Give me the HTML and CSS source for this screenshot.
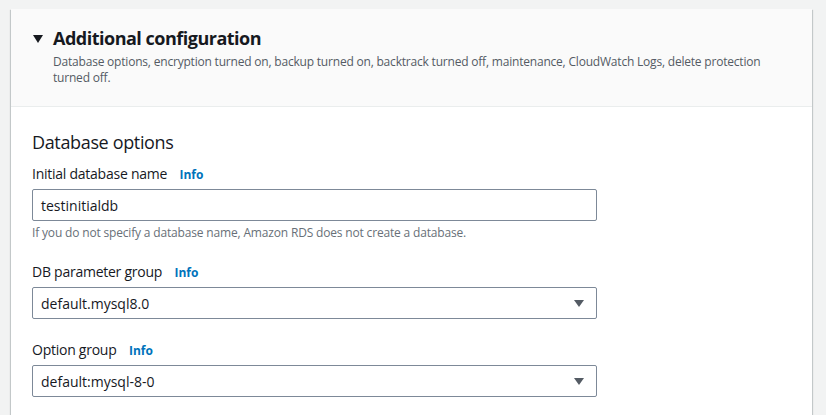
FILE: index.html
```html
<!DOCTYPE html>
<html>
<head>
<meta charset="utf-8">
<link rel="stylesheet" href="styles.css">
</head>
<body>
<div class="card">
  <div class="card-header">
    <div class="title-row">
      <svg class="caret" width="10" height="8" viewBox="0 0 10 8"><path d="M0 0 H10 L5 8 Z" fill="#16191f"/></svg>
      <h2 class="title">Additional configuration</h2>
    </div>
    <p class="desc">Database options, encryption turned on, backup turned on, backtrack turned off, maintenance, CloudWatch Logs, delete protection turned off.</p>
  </div>
  <div class="card-body">
    <h3 class="section">Database options</h3>
    <div class="field">
      <div class="label">Initial database name <span class="info">Info</span></div>
      <div class="input">testinitialdb</div>
      <div class="hint">If you do not specify a database name, Amazon RDS does not create a database.</div>
    </div>
    <div class="field">
      <div class="label">DB parameter group <span class="info">Info</span></div>
      <div class="input select">default.mysql8.0<svg class="arrow" width="10" height="7" viewBox="0 0 10 7"><path d="M0 0 H10 L5 7 Z" fill="#545b64"/></svg></div>
    </div>
    <div class="field">
      <div class="label">Option group <span class="info">Info</span></div>
      <div class="input select">default:mysql-8-0<svg class="arrow" width="10" height="7" viewBox="0 0 10 7"><path d="M0 0 H10 L5 7 Z" fill="#545b64"/></svg></div>
    </div>
  </div>
</div>
</body>
</html>
```

FILE: styles.css
```css
html, body {
  margin: 0;
  padding: 0;
  background: #f2f3f3;
  font-family: "Open Sans", "Noto Sans", sans-serif;
  color: #16191f;
}
.card {
  margin: 9px 0 0 11px;
  width: 801px;
  background: #fff;
  box-shadow: 0 1px 1px 0 rgba(0, 28, 36, 0.3), 1px 1px 1px 0 rgba(0, 28, 36, 0.15), -1px 1px 1px 0 rgba(0, 28, 36, 0.15);
  min-height: 420px;
}
.card-header {
  background: #fafafa;
  border-bottom: 1px solid #eaeded;
  padding: 19px 20px 20px 22px;
}
.title-row {
  display: flex;
  align-items: center;
}
.caret {
  margin-right: 10px;
}
.title {
  margin: 0;
  font-size: 18px;
  line-height: 21px;
  font-weight: 700;
  letter-spacing: -0.5px;
}
.desc {
  margin: 5px 0 0 20px;
  font-size: 12px;
  line-height: 16px;
  color: #545b64;
  letter-spacing: -0.2px;
}
.card-body {
  padding: 24px 20px 20px 21px;
}
.section {
  margin: 0;
  font-size: 18px;
  line-height: 22px;
  font-weight: 400;
  letter-spacing: -0.35px;
}
.field {
  margin-top: 11px;
  width: 565px;
}
.field + .field {
  margin-top: 21px;
}
.label {
  font-size: 14px;
  line-height: 20px;
  letter-spacing: -0.25px;
}
.info {
  margin-left: 9px;
  font-size: 12px;
  font-weight: 700;
  color: #0073bb;
  letter-spacing: 0;
}
.input {
  margin-top: 4px;
  height: 30px;
  border: 1px solid #7d8998;
  border-radius: 2px;
  box-sizing: content-box;
  padding: 0 8px;
  display: flex;
  align-items: center;
  font-size: 14px;
  background: #fff;
}
.select {
  justify-content: space-between;
  padding-right: 12px;
}
.hint {
  margin-top: 4px;
  font-size: 12px;
  line-height: 16px;
  color: #687078;
  letter-spacing: -0.17px;
}
```
